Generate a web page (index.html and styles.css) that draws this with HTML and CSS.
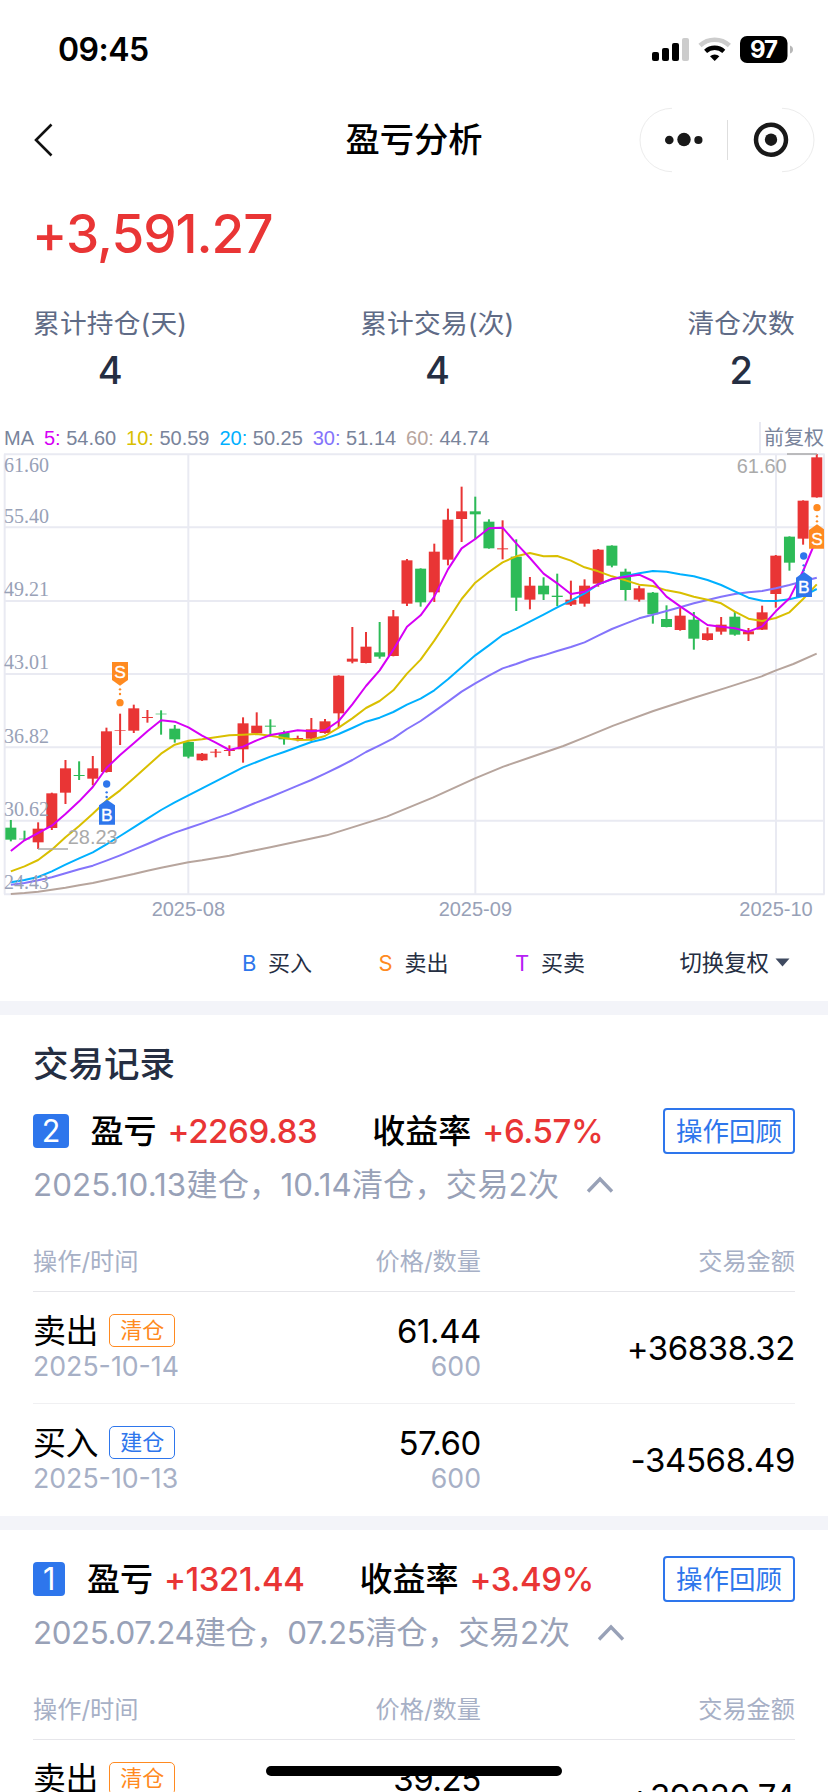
FILE: index.html
```html
<!DOCTYPE html>
<html lang="zh-CN">
<head>
<meta charset="utf-8">
<title>盈亏分析</title>
<link rel="stylesheet" href="styles.css">
</head>
<body>
<div class="screen">
  <header class="status">
    <span class="clock">09:45</span>
    <svg class="status-icons" width="146" height="32" viewBox="0 0 146 32">
      <rect x="1" y="18" width="7" height="9" rx="2"/>
      <rect x="11" y="14" width="7" height="13" rx="2"/>
      <rect x="21" y="9" width="7" height="18" rx="2"/>
      <rect x="31" y="4" width="7" height="23" rx="2" fill="#ccc"/>
      <path d="M49 11.5a21.5 21.5 0 0 1 29.4 0" fill="none" stroke="#ccc" stroke-width="4.6"/>
      <path d="M54.600 17.300a13.500 13.500 0 0 1 18.200 0" fill="none" stroke="#000" stroke-width="4.400"/>
      <path d="M63.700 27l-4.700-4.700a7 7 0 0 1 9.400 0z"/>
      <rect x="89" y="2" width="47.500" height="27" rx="7"/>
      <path d="M139 11.500q3 1 3 4t-3 4z" fill="#b8b8b8"/>
      <text x="112.500" y="24" text-anchor="middle" class="battery">97</text>
    </svg>
  </header>

  <nav class="nav">
    <svg class="back" width="22" height="36" viewBox="0 0 22 36"><path d="M18.500 2.500 3 18l15.500 15.500" fill="none" stroke="#111" stroke-width="2.600"/></svg>
    <h1>盈亏分析</h1>
    <svg class="capsule" width="176" height="66" viewBox="0 0 176 66">
      <path d="M33 1.300a32 31.700 0 0 0 0 63.400M143 1.300a32 31.700 0 0 1 0 63.400" fill="none" stroke="#ececec"/>
      <path d="M88.500 13v40" stroke="#dedede"/>
      <circle cx="30.300" cy="33" r="4.300"/><circle cx="45" cy="32.500" r="6.700"/><circle cx="59.400" cy="33" r="4.100"/>
      <circle cx="132" cy="32.700" r="15" fill="none" stroke="#191919" stroke-width="4.500"/><circle cx="132" cy="32.700" r="6.200"/>
    </svg>
  </nav>

  <div class="total">+3,591.27</div>
  <div class="stats">
    <div><span>累计持仓(天)</span><b>4</b></div>
    <div><span>累计交易(次)</span><b>4</b></div>
    <div><span>清仓次数</span><b>2</b></div>
  </div>

  <div class="ma">
    <span>MA</span>
    <span><i class="c5">5:</i> 54.60</span>
    <span><i class="c10">10:</i> 50.59</span>
    <span><i class="c20">20:</i> 50.25</span>
    <span><i class="c30">30:</i> 51.14</span>
    <span><i class="c60">60:</i> 44.74</span>
    <span class="adjust">前复权</span>
  </div>
  <svg class="chart" id="chart" width="828" height="474" viewBox="0 126 2484 1422"></svg>

  <div class="legend">
    <span class="key"><i class="buy">B</i>买入</span>
    <span class="key"><i class="sell">S</i>卖出</span>
    <span class="key"><i class="both">T</i>买卖</span>
    <span class="switch">切换复权<svg width="15" height="10" viewBox="0 0 15 10"><path d="M.5 1.500h14L7.500 9.500z" fill="#3f4a60"/></svg></span>
  </div>

  <div class="band"></div>
  <h2>交易记录</h2>

  <section class="trade">
    <div class="head"><span class="no">2</span><b>盈亏</b><em>+2269.83</em><b class="rate">收益率</b><em>+6.57%</em><button>操作回顾</button></div>
    <div class="sub">2025.10.13建仓，10.14清仓，交易2次<svg width="28" height="18" viewBox="0 0 28 18"><path d="M2 15.500 14 3l12 12.500" fill="none" stroke="#98a1b7" stroke-width="3.400"/></svg></div>
    <div class="row th"><span>操作/时间</span><span>价格/数量</span><span>交易金额</span></div>
    <div class="row">
      <div><p>卖出<i class="tag out">清仓</i></p><small>2025-10-14</small></div>
      <div><p>61.44</p><small>600</small></div>
      <div class="amount">+36838.32</div>
    </div>
    <div class="row last">
      <div><p>买入<i class="tag">建仓</i></p><small>2025-10-13</small></div>
      <div><p>57.60</p><small>600</small></div>
      <div class="amount">-34568.49</div>
    </div>
  </section>

  <div class="band"></div>
  <section class="trade second">
    <div class="head"><span class="no">1</span><b>盈亏</b><em>+1321.44</em><b class="rate">收益率</b><em>+3.49%</em><button>操作回顾</button></div>
    <div class="sub">2025.07.24建仓，07.25清仓，交易2次<svg width="28" height="18" viewBox="0 0 28 18"><path d="M2 15.500 14 3l12 12.500" fill="none" stroke="#98a1b7" stroke-width="3.400"/></svg></div>
    <div class="row th"><span>操作/时间</span><span>价格/数量</span><span>交易金额</span></div>
    <div class="row">
      <div><p>卖出<i class="tag out">清仓</i></p></div>
      <div><p>39.25</p></div>
      <div class="amount">+39220.74</div>
    </div>
  </section>
  <div class="home"></div>
</div>
<script src="chart.js"></script>
</body>
</html>
```
FILE: styles.css
```css
* { box-sizing: border-box; margin: 0; padding: 0; }
body { background: #fff; font-family: Inter, "Noto Sans CJK SC", sans-serif; color: #000; }
i, em { font-style: normal; }
.screen { position: relative; width: 828px; height: 1792px; overflow: hidden; }

.status { height: 94px; padding: 34px 31px 0 58px; display: flex; justify-content: space-between; }
.clock { font-size: 32px; font-weight: 600; line-height: 32px; letter-spacing: -0.5px; }
.battery { font-size: 24px; font-weight: 700; fill: #fff; letter-spacing: -1px; }

.nav { height: 92px; padding: 0 13px 0 33px; display: grid; grid-template-columns: 176px 1fr 176px; align-items: center; }
.nav h1 { font-size: 34.300px; font-weight: 500; text-align: center; padding-right: 20px; line-height: 48px; }
.capsule { fill: #191919; }

.total { height: 96px; line-height: 96px; padding-left: 32px; font-size: 53px; font-weight: 500; color: #e93535; letter-spacing: -1px; }
.stats { display: flex; justify-content: space-between; padding: 20px 33px 0; text-align: center; color: #5f6b86; }
.stats span { display: block; font-size: 26.700px; letter-spacing: 0.2px; line-height: 42px; }
.stats b { display: block; font-size: 38px; font-weight: 500; line-height: 52px; color: #252e42; }

.ma { margin-top: 26px; height: 30px; padding-left: 4px; display: flex; gap: 9.900px; align-items: center; font: 20px/30px "Liberation Sans", "Noto Sans CJK SC", sans-serif; color: #79849b; white-space: pre; }
.ma span { padding-top: 1px; }
.ma .adjust { margin-left: auto; padding: 1px 4px 0 3px; border-left: 2px solid #e9eaf2; }
.c5 { color: #d600f5; }
.c10 { color: #d9bf00; }
.c20 { color: #00b0ff; }
.c30 { color: #8474fb; }
.c60 { color: #b7a59d; }

.chart { display: block; }
.grid { stroke: #e9eaf2; stroke-width: 6; }
.ylabel { font: 60px "Liberation Serif", serif; fill: #98a1b7; }
.xlabel { font: 60px "Liberation Sans", sans-serif; fill: #98a1b7; text-anchor: middle; }
.extreme { font: 60px "Liberation Sans", sans-serif; fill: #aaa; }
.mark { font: 52px "Liberation Sans", sans-serif; fill: #fff; stroke: #fff; stroke-width: 1; text-anchor: middle; }

.legend { height: 75px; padding: 0 38px 6px 242px; display: flex; align-items: center; font-size: 22px; color: #252e42; }
.key { width: 136.500px; display: flex; align-items: baseline; gap: 12px; }
.key i { width: 14px; text-align: center; }
.buy { color: #2e76ec; }
.sell { color: #ff8a20; }
.both { color: #b620f5; }
.switch { margin-left: auto; display: flex; align-items: center; gap: 6px; font-size: 22.400px; }
.switch svg { margin-top: 2px; }

.band { height: 14px; background: #f3f4f9; }
h2 { height: 93px; padding: 5px 0 0 33px; font-size: 35.500px; line-height: 90px; font-weight: 500; color: #252e42; }

.trade { padding: 0 33px; }
.second { padding-top: 26px; }
.head { height: 46px; display: flex; align-items: center; font-size: 33px; line-height: 46px; }
.no { height: 34px; line-height: 34px; padding: 0 8.700px; margin-right: 21.500px; font-size: 30.500px; background: #2e76ec; border-radius: 4px; color: #fff; }
.second .no { padding: 0 10px; }
.head b { font-weight: 500; }
.head em { margin-left: 11px; font-weight: 500; color: #e93535; letter-spacing: -0.4px; }
.rate { margin-left: 55px; }
.head button { margin-left: auto; width: 132px; height: 46px; border: 2px solid #2e76ec; border-radius: 4px; background: #fff; color: #2e76ec; font: 26.500px/40px Inter, "Noto Sans CJK SC", sans-serif; }
.sub { height: 62px; line-height: 62px; font-size: 31.300px; letter-spacing: 0.080px; color: #98a1b7; display: flex; align-items: center; }
.second .sub { letter-spacing: -0.370px; }
.sub svg { margin-left: 27px; }
.row { height: 112px; display: grid; grid-template-columns: 224px 224px 1fr; border-bottom: 1px solid #f0f0f2; padding-top: 19px; }
.row > :nth-child(n+2) { text-align: right; }
.th { height: 76px; padding-top: 16px; font-size: 24.200px; line-height: 60px; color: #a7b0c6; border-color: #e6e6ea; }
.last { border: 0; }
.row p { font-size: 33px; line-height: 44px; height: 39px; display: flex; align-items: center; letter-spacing: -0.4px; }
.row > :nth-child(2) p { justify-content: flex-end; }
.row small { display: block; font-size: 26.700px; line-height: 32px; color: #a7b0c6; }
.amount { font-size: 33px; line-height: 74px; letter-spacing: -0.4px; }
.tag { margin-left: 11px; width: 66px; height: 33px; border: 1.500px solid #2e76ec; border-radius: 5px; font-size: 22px; line-height: 30px; text-align: center; color: #2e76ec; letter-spacing: 0; }
.out { border-color: #ff8a20; color: #ff8a20; }
.home { position: absolute; left: 266px; top: 1766px; width: 296px; height: 10px; border-radius: 5px; background: #000; }
```
FILE: chart.js
```js
const svg = document.getElementById('chart');
const X0 = 32.5, STEP = 40.98;
const RED = '#e93535', GREEN = '#2dbb57';
const x = i => X0 + STEP * i;

function add(name, attrs, text) {
  const el = document.createElementNS('http://www.w3.org/2000/svg', name);
  for (const k in attrs) el.setAttribute(k, attrs[k]);
  if (text) el.textContent = text;
  svg.appendChild(el);
}

// grid
[133, 352, 573, 792, 1012, 1232, 1453].forEach(y => add('path', { class: 'grid', d: `M12 ${y}H2474` }));
[14, 565, 1426, 2328, 2472].forEach(gx => add('path', { class: 'grid', d: `M${gx} 133V1453` }));

// candles: direction (1 up, 0 down), high, body top, body bottom, low
const blocks = [
  { dy: 720, rows: [
    [0,510,533,569,574],[0,542,566,568,570],[1,517,536,577,597],[1,428,430,534,540],[1,330,355,428,462],
    [0,334,375,378,390],[1,318,355,386,406],[1,233,244,366,368],[1,191,241,243,285],[1,164,175,242,249],
    [1,180,201,204,218],[0,181,191,193,254],[0,225,236,268,278],[0,274,276,320,325],[1,309,311,331,333],
    [1,297,305,308,322],[1,286,300,303,318],[1,202,220,298,338],[1,187,227,250,251],[0,208,227,230,260]] },
  { dy: 90, rows: [
    [0,838,856,859,884],[0,872,879,898,914],[1,887,894,897,904],[1,834,868,896,903],[1,837,844,879,881],[1,706,707,820,862],
    [1,561,656,665,670],[1,576,620,669,670],[0,546,637,650,656],[1,510,529,648,649],[1,357,361,491,498],
    [0,385,386,487,500],[1,311,335,457,486],[1,206,239,359,376],[1,140,214,237,306],[0,170,214,223,298],
    [0,238,245,325,326],[1,241,325,328,358],[0,298,350,473,513],[1,411,437,479,508]].slice(1) },
  { dy: 0, rows: [
    [0,502,527,553,570],[0,491,557,561,588],[1,512,569,584,588],[1,508,527,581,590],[1,417,419,521,530],
    [0,406,407,467,472],[0,476,485,540,572],[1,527,535,569,575],[0,546,548,613,641],[0,586,627,651,652],
    [1,590,617,660,662],[0,606,629,686,719],[1,652,670,690,692],[1,621,644,665,674],[0,606,620,674,677],
    [1,654,664,673,693],[1,587,607,659,660],[1,435,437,552,593],[0,379,380,458,482],[1,271,272,386,404],
    [1,132,142,262,263]] }
];
let n = 0;
for (const { dy, rows } of blocks) {
  for (const [up, high, top, bottom, low] of rows) {
    const fill = up ? RED : GREEN, cx = x(n++);
    add('rect', { x: cx - 3, y: high + dy, width: 6, height: low - high, fill });
    add('rect', { x: cx - 16.5, y: top + dy, width: 33, height: bottom - top, fill });
  }
}

// moving averages, one value per candle
const shift = (a, b, c) => [...a.map(v => v + 720), ...b.map(v => v + 90), ...c];
const averages = [
  ['#b7a59d', null],
  ['#8474fb', shift(
    [704,699,691,682,670,658,647,632,616,599,582,564,548,534,520,505,491,474,457,441],
    [1054,1037,1020,1001,981,960,936,916,895,867,843,814,785,755,730,707,685,672,657],
    [736,723,711,697,677,657,641,625,614,603,592,580,570,560,552,547,543,535,525,514,503])],
  ['#00b0ff', shift(
    [697,690,681,664,644,625,607,583,558,532,506,480,457,436,415,394,373,352,336,320],
    [936,921,906,896,882,864,845,833,816,794,776,751,718,682,646,616,585,566,545],
    [614,592,572,550,523,508,498,490,483,485,493,499,510,525,544,563,572,573,568,558,537])],
  ['#d9bf00', shift(
    [664,649,630,599,562,528,491,452,421,385,348,311,284,272,268,262,256,254,252,257],
    [894,900,899,888,863,835,804,783,751,701,659,602,540,477,428,396,367,349,339],
    [439,438,452,472,484,499,511,524,528,541,548,560,569,580,605,626,633,624,607,567,523])],
  ['#d600f5', shift(
    [603,571,549,527,492,454,411,354,315,280,244,211,215,232,257,278,300,290,271,255],
    [878,871,874,871,843,793,738,691,629,560,526,470,388,325,297,265,263,310,354],
    [491,520,552,545,523,507,500,494,513,560,589,617,645,650,655,665,649,604,565,483,385])]
];
const slow = [1452,1449,1445,1439,1433,1426,1419,1410,1401,1392,1382,1373,1365,1357,1351,1344,1337,1328,1320,1312]
  .map((y, i) => [x(i), y])
  .concat([[980,1276],[1160,1220],[1220,1195],[1300,1162],[1425,1105],[1510,1070],[1620,1032],[1690,1008],[1760,980],
    [1840,947],[1960,903],[2080,864],[2180,833],[2285,799],[2328,781],[2380,762],[2450,731]]);
for (const [stroke, ys] of averages) {
  const pts = ys ? ys.map((y, i) => [x(i), y]) : slow;
  add('polyline', { points: pts.map(p => p.join()).join(' '), fill: 'none', stroke, 'stroke-width': 6, 'stroke-linejoin': 'round' });
}

// axis labels
[['61.60',186],['55.40',339],['49.21',559],['43.01',778],['36.82',998],['30.62',1218],['24.43',1437]]
  .forEach(([t, y]) => add('text', { class: 'ylabel', x: 12, y }, t));
[['2025-08',565],['2025-09',1426],['2025-10',2328]]
  .forEach(([t, cx]) => add('text', { class: 'xlabel', x: cx, y: 1517 }, t));

// low and high of the period
add('path', { d: 'M114 1317h90M2361 132h90', stroke: '#aaa', 'stroke-width': 5 });
add('text', { class: 'extreme', x: 203, y: 1302 }, '28.23');
add('text', { class: 'extreme', x: 2210, y: 188 }, '61.60');

// trade markers
function marker(cx, dot, dots, shape, fill, label, base) {
  add('circle', { cx, cy: dot, r: 11, fill });
  dots.forEach(y => add('circle', { cx, cy: y, r: 3.6, fill }));
  add('path', { d: shape, fill });
  add('text', { class: 'mark', x: cx, y: base }, label);
}
marker(360, 878, [838, 852], 'M336 756h48v54l-24 17-24-17z', '#ff8a20', 'S', 804);
marker(320, 1122, [1147, 1161], 'M297 1244v-58l24-17 24 17v58z', '#2e76ec', 'B', 1234);
marker(2411, 438, [466, 481], 'M2388 561v-58l24-17 24 17v58z', '#2e76ec', 'B', 549);
marker(2451, 293, [319, 334], 'M2427 416v-56l24-17 21 15v58z', '#ff8a20', 'S', 406);
```
